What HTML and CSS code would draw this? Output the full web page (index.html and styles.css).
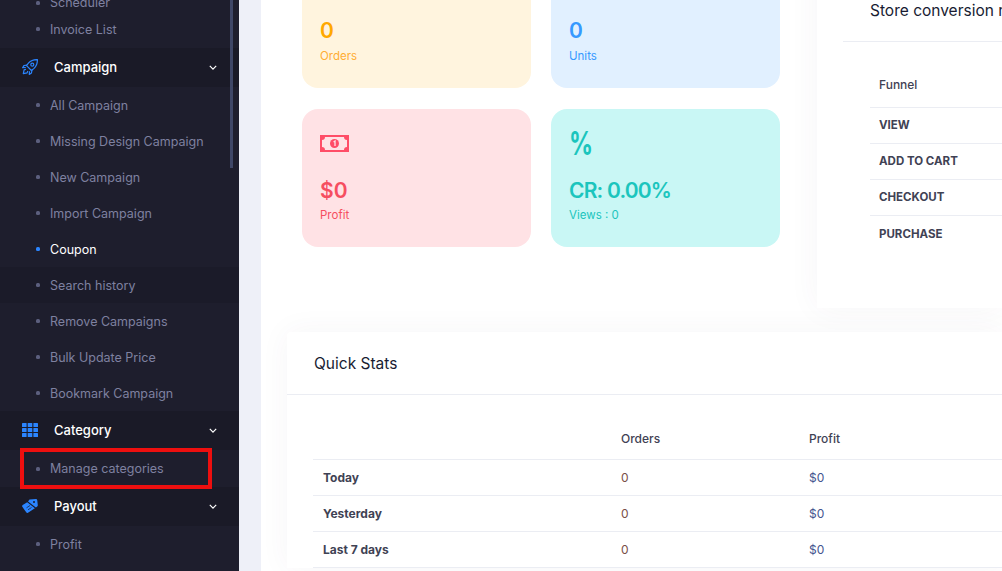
FILE: index.html
```html
<!DOCTYPE html>
<html lang="en">
<head>
    <meta charset="UTF-8">
    <meta name="viewport" content="width=device-width, initial-scale=1.0">
    <title>Dashboard</title>
    <link rel="stylesheet" href="styles.css">
</head>
<body>
    <div class="layout">
        <aside class="sidebar">
            <div class="scroll-thumb"></div>
            <ul class="menu">
                <li class="item item-first"><span class="dot"></span>Scheduler</li>
                <li class="item item-second"><span class="dot"></span>Invoice List</li>
                <li class="head">
                    <svg class="head-icon" viewBox="0 0 16 16" fill="none" stroke="#2b85ff" stroke-width="1.2" stroke-linejoin="round">
                        <path d="M15.400 .6c-3.600-.1-6.600 1-8.800 3.300L4.500 6.600l4.900 4.900 2.700-2.100c2.300-2.200 3.400-5.200 3.300-8.800z"/>
                        <circle cx="10.300" cy="5.700" r="1.500"/>
                        <path d="M5 6 1.900 6.600 .6 8.700l3.200-.2M10 11l-.6 3.100-2.100 1.300.2-3.200M4 10.200l-1.900.7-.8 3.800 3.800-.8.7-1.900"/>
                    </svg>
                    <span class="head-label">Campaign</span>
                    <svg class="chev" viewBox="0 0 10 6"><path d="M1 1l4 4 4-4" fill="none" stroke="#fff" stroke-width="1.500"/></svg>
                </li>
                <li class="item"><span class="dot"></span>All Campaign</li>
                <li class="item"><span class="dot"></span>Missing Design Campaign</li>
                <li class="item"><span class="dot"></span>New Campaign</li>
                <li class="item"><span class="dot"></span>Import Campaign</li>
                <li class="item active"><span class="dot"></span>Coupon</li>
                <li class="item hover"><span class="dot"></span>Search history</li>
                <li class="item"><span class="dot"></span>Remove Campaigns</li>
                <li class="item"><span class="dot"></span>Bulk Update Price</li>
                <li class="item"><span class="dot"></span>Bookmark Campaign</li>
                <li class="head">
                    <svg class="head-icon" viewBox="0 0 16 14" fill="#2b85ff">
                        <rect x="0" y="0" width="4.600" height="4" rx=".6"/>
                        <rect x="5.700" y="0" width="4.600" height="4" rx=".6"/>
                        <rect x="11.400" y="0" width="4.600" height="4" rx=".6"/>
                        <rect x="0" y="5" width="4.600" height="4" rx=".6"/>
                        <rect x="5.700" y="5" width="4.600" height="4" rx=".6"/>
                        <rect x="11.400" y="5" width="4.600" height="4" rx=".6"/>
                        <rect x="0" y="10" width="4.600" height="4" rx=".6"/>
                        <rect x="5.700" y="10" width="4.600" height="4" rx=".6"/>
                        <rect x="11.400" y="10" width="4.600" height="4" rx=".6"/>
                    </svg>
                    <span class="head-label">Category</span>
                    <svg class="chev" viewBox="0 0 10 6"><path d="M1 1l4 4 4-4" fill="none" stroke="#fff" stroke-width="1.500"/></svg>
                </li>
                <li class="item marked"><span class="dot"></span>Manage categories<span class="red-box"></span></li>
                <li class="head">
                    <svg class="head-icon" viewBox="0 0 16 14" fill="#2b85ff">
                        <path d="M6 2.500 7.500.4 13.800 0c.9 0 1.500.6 1.500 1.500l.5 4.800c0 .5-.2.9-.6 1.200l-1.300.9z"/>
                        <path d="M5.200 3.300.7 6.100c-.6.4-.8 1.100-.4 1.700l3.900 5.500c.4.6 1.200.8 1.800.4l6.900-4.400z"/>
                        <circle cx="12" cy="3" r="1" fill="#1a1a27"/>
                        <path d="M4.500 8.800 8 6.500M6 10.800 9.500 8.500" stroke="#1a1a27" stroke-width=".7"/>
                    </svg>
                    <span class="head-label">Payout</span>
                    <svg class="chev" viewBox="0 0 10 6"><path d="M1 1l4 4 4-4" fill="none" stroke="#fff" stroke-width="1.500"/></svg>
                </li>
                <li class="item"><span class="dot"></span>Profit</li>
            </ul>
        </aside>

        <main class="main">
            <div class="top-row">
                <div class="stat-grid">
                    <div class="stat stat-orange">
                        <div class="stat-value">0</div>
                        <div class="stat-label">Orders</div>
                    </div>
                    <div class="stat stat-blue">
                        <div class="stat-value">0</div>
                        <div class="stat-label">Units</div>
                    </div>
                    <div class="stat stat-red">
                        <svg class="stat-icon" viewBox="0 0 29 17">
                            <path fill="#ff4d67" fill-rule="evenodd" d="M0 0h29v17H0zM5 2Q5 5 2 5V12Q5 12 5 15H24Q24 12 27 12V5Q24 5 24 2z"/>
                            <circle cx="14.500" cy="8.500" r="4.500" fill="#ff4d67"/>
                            <path d="M13.600 7l1.400-1v5" fill="none" stroke="#ffe2e6" stroke-width="1.300"/>
                        </svg>
                        <div class="stat-value">$0</div>
                        <div class="stat-label">Profit</div>
                    </div>
                    <div class="stat stat-teal">
                        <div class="percent">%</div>
                        <div class="stat-value">CR: 0.00%</div>
                        <div class="stat-label">Views : 0</div>
                    </div>
                </div>

                <section class="card side-card">
                    <h3 class="card-title side-title">Store conversion rate</h3>
                    <table class="side-table">
                        <tr class="funnel"><td>Funnel</td></tr>
                        <tr><th>VIEW</th></tr>
                        <tr><th>ADD TO CART</th></tr>
                        <tr><th>CHECKOUT</th></tr>
                        <tr><th>PURCHASE</th></tr>
                    </table>
                </section>
            </div>

            <section class="card quick-card">
                <h3 class="card-title quick-title">Quick Stats</h3>
                <table class="quick-table">
                    <thead>
                        <tr>
                            <th class="col-name"></th>
                            <th class="col-orders">Orders</th>
                            <th class="col-profit">Profit</th>
                        </tr>
                    </thead>
                    <tbody>
                        <tr><th>Today</th><td class="val-orders">0</td><td class="val-profit">$0</td></tr>
                        <tr><th>Yesterday</th><td class="val-orders">0</td><td class="val-profit">$0</td></tr>
                        <tr><th>Last 7 days</th><td class="val-orders">0</td><td class="val-profit">$0</td></tr>
                    </tbody>
                </table>
            </section>
        </main>
    </div>
</body>
</html>
```

FILE: styles.css
```css
* {
    box-sizing: border-box;
}
html, body {
    height: 100%;
    overflow: hidden;
}
body {
    margin: 0;
    font-family: 'Inter', 'Liberation Sans', sans-serif;
    background-color: #fff;
    color: #3f4254;
}
.layout {
    display: flex;
    height: 571px;
    overflow: hidden;
}

/* sidebar */
.sidebar {
    position: relative;
    flex: 0 0 239px;
    background-color: #1e1e2d;
    overflow: hidden;
}
.scroll-thumb {
    position: absolute;
    top: 0;
    left: 230px;
    width: 3px;
    height: 168px;
    background-color: #3f4767;
}
.menu {
    list-style: none;
    margin: -6px 0 0;
    padding: 0;
}
.item {
    position: relative;
    display: flex;
    align-items: center;
    height: 36px;
    padding-left: 36px;
    font-size: 12.500px;
    color: #7e81a0;
}
.item-first {
    height: 17px;
}
.item-second {
    height: 37px;
    padding-bottom: 1px;
}
.dot {
    flex: none;
    width: 4px;
    height: 4px;
    margin-right: 10px;
    border-radius: 1.500px;
    background-color: #5c5f7e;
}
.active {
    color: #fff;
}
.active .dot {
    background-color: #2b85ff;
}
.hover {
    background-color: #1b1b29;
}
.marked {
    height: 37px;
}
.red-box {
    position: absolute;
    top: -2px;
    left: 20px;
    width: 192px;
    height: 41px;
    border: 4px solid #ee0f0f;
}
.head {
    display: flex;
    align-items: center;
    height: 39px;
    padding: 0 22px 1px;
    background-color: #1a1a27;
    font-size: 13px;
    font-weight: 500;
    color: #fff;
}
.head-icon {
    flex: none;
    width: 16px;
    height: 16px;
}
.head-label {
    flex: 1;
    margin-left: 16px;
}
.chev {
    flex: none;
    width: 8px;
    height: 5px;
}

/* main */
.main {
    flex: 1;
    min-width: 0;
    margin-left: 22px;
    margin-top: -50px;
    background-color: #fff;
    box-shadow: -22px 0 0 #eef0f8;
}
.top-row {
    display: flex;
    align-items: flex-start;
    padding-left: 41px;
}
.stat-grid {
    display: grid;
    grid-template-columns: 229px 229px;
    grid-auto-rows: 138px;
    gap: 21px 20px;
    flex: none;
}
.stat {
    padding: 20px 18px;
    border-radius: 16px;
}
.stat-icon {
    display: block;
    width: 29px;
    height: 17px;
    margin: 6px 0 25px;
}
.percent {
    width: 30px;
    height: 30px;
    margin-bottom: 18px;
    font-size: 32px;
    font-weight: 700;
    line-height: 30px;
    transform: scaleX(.74);
    transform-origin: left center;
}
.stat-value {
    font-size: 21px;
    font-weight: 600;
    line-height: 28px;
}
.stat-label {
    margin-top: 2px;
    font-size: 11.500px;
    line-height: 18px;
}
.stat-red .stat-label,
.stat-teal .stat-label {
    margin-top: 1px;
}
.stat-orange,
.stat-blue {
    padding-top: 67px;
}
.stat-orange {
    background-color: #fff4de;
    color: #ffa800;
}
.stat-orange .stat-label {
    color: #ffad33;
}
.stat-blue {
    background-color: #e1f0ff;
    color: #3699ff;
}
.stat-red {
    background-color: #ffe2e5;
    color: #f64e60;
}
.stat-teal {
    background-color: #c9f7f5;
    color: #1bc5bd;
}
.stat-teal .stat-value {
    letter-spacing: -0.8px;
}

.card {
    background-color: #fff;
    box-shadow: 0 0 30px rgba(82, 63, 105, 0.05);
}
.card-title {
    margin: 0;
    font-size: 15.500px;
    font-weight: 400;
    color: #181c32;
    white-space: nowrap;
}
.side-card {
    flex: 1;
    height: 358px;
    margin-left: 37px;
    padding-left: 26px;
    overflow: hidden;
}
.side-title {
    height: 92px;
    padding: 51px 0 0 27px;
    line-height: 20px;
    border-bottom: 1px solid #ebedf3;
}
.side-table {
    width: 100%;
    margin: 0 0 0 27px;
    border-collapse: collapse;
}
.side-table td,
.side-table th {
    height: 36px;
    padding: 0 9px;
    text-align: left;
    font-size: 11.500px;
    border-bottom: 1px solid #ebedf3;
}
.side-table th {
    font-weight: 700;
}
.side-table tr:last-child th {
    height: 38px;
    border-bottom: 0;
}
.side-table .funnel td {
    height: 65px;
    padding-top: 21px;
    font-size: 12px;
    font-weight: 500;
}

.quick-card {
    margin: 24px 0 0 26px;
    border-radius: 4px 0 0 0;
}
.quick-title {
    height: 63px;
    padding-left: 27px;
    line-height: 63px;
    border-bottom: 1px solid #ebedf3;
}
.quick-table {
    width: 689px;
    margin: 24px 0 0 26px;
    border-collapse: collapse;
    font-size: 12px;
}
.quick-table th,
.quick-table td {
    height: 36px;
    padding: 0 9px;
    text-align: left;
    border-bottom: 1px solid #ebedf3;
}
.quick-table thead th {
    height: 40px;
    font-weight: 500;
}
.quick-table tbody th {
    padding-left: 10px;
    font-weight: 700;
}
.col-name {
    width: 299px;
}
.col-orders {
    width: 188px;
}
.val-orders {
    color: #7a4f48;
}
.val-profit {
    color: #44558f;
}
```
